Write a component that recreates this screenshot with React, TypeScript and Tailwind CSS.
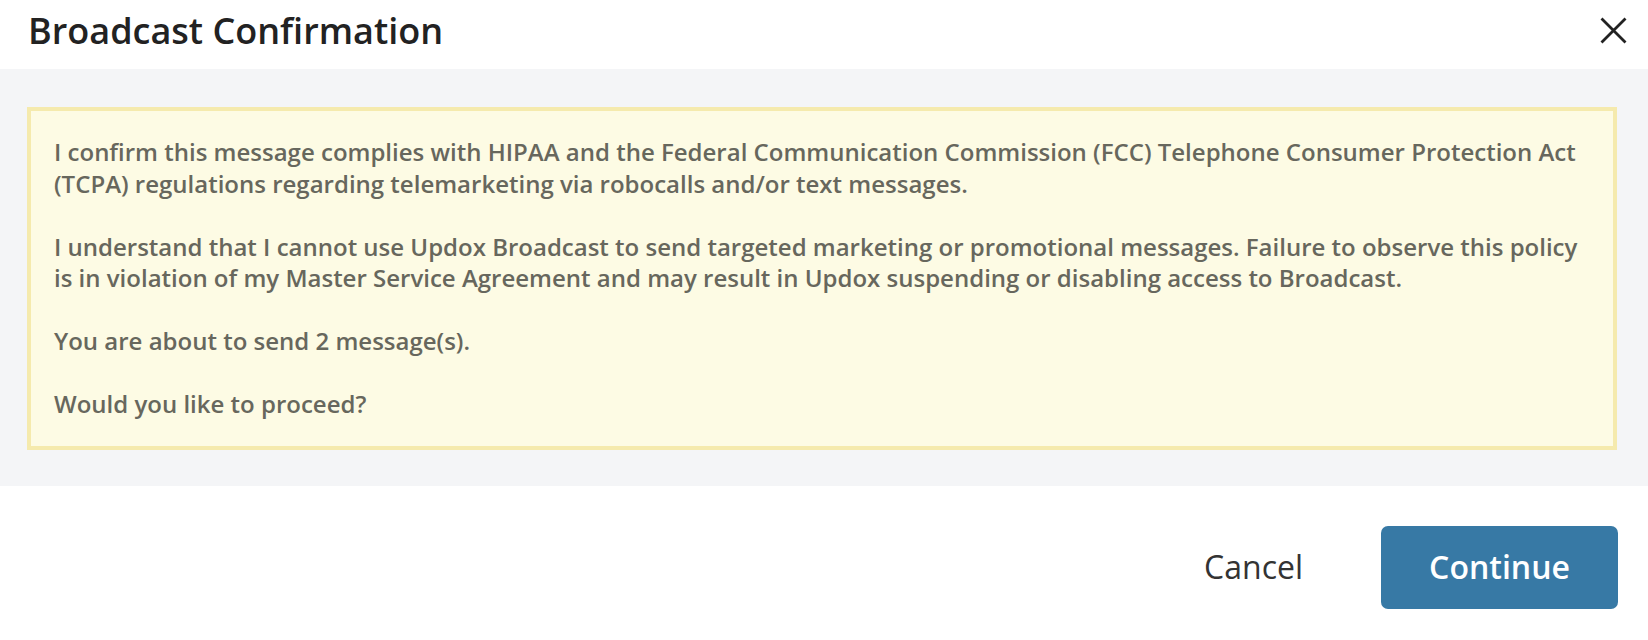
import React from "react";

export default function App() {
  return (
    <div
      className="w-[1648px] h-[640px] bg-white flex flex-col"
      style={{ fontFamily: '"Open Sans", "Noto Sans", sans-serif' }}
    >
      <div className="h-[69px] flex items-center justify-between pl-[28px] pr-[21px] pb-[8px]">
        <h1 className="text-[36px] font-semibold text-[#222222] leading-none">Broadcast Confirmation</h1>
        <button className="w-[27px] h-[27px] flex items-center justify-center text-[#222222]">
          <svg width="27" height="27" viewBox="0 0 27 27" fill="none" stroke="currentColor" strokeWidth="2.8">
            <path d="M1.5 1.5 L25.5 25.5 M25.5 1.5 L1.5 25.5" />
          </svg>
        </button>
      </div>
      <div className="bg-[#f4f5f7] pl-[27px] pr-[31px] pt-[38px] pb-[36px]">
        <div className="bg-[#fdfbe4] border-4 border-[#f5eaad] px-[23px] pt-[25px] pb-[26px] text-[24px] leading-[31.5px] font-semibold text-[#67675d]">
          <p>
            I confirm this message complies with HIPAA and the Federal Communication Commission (FCC) Telephone Consumer Protection Act (TCPA) regulations regarding telemarketing via robocalls and/or text messages.
          </p>
          <p className="mt-[31.5px]">
            I understand that I cannot use Updox Broadcast to send targeted marketing or promotional messages. Failure to observe this policy is in violation of my Master Service Agreement and may result in Updox suspending or disabling access to Broadcast.
          </p>
          <p className="mt-[31.5px]">You are about to send 2 message(s).</p>
          <p className="mt-[31.5px]">Would you like to proceed?</p>
        </div>
      </div>
      <div className="flex items-start justify-end pt-[40px] pr-[30px] gap-[78px]">
        <button className="h-[83px] text-[32px] text-[#333333] leading-none">Cancel</button>
        <button className="w-[237px] h-[83px] rounded-[7px] bg-[#3779a5] text-white text-[32px] font-semibold leading-none">
          Continue
        </button>
      </div>
    </div>
  );
}
